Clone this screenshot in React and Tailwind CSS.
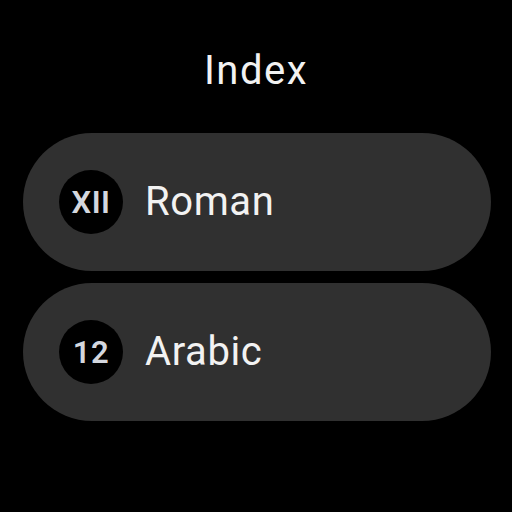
const items = [
  { badge: "XII", label: "Roman" },
  { badge: "12", label: "Arabic" },
];

function IndexRow({ badge, label }) {
  return (
    <div className="flex h-[138px] w-[468px] items-center rounded-full bg-[#303030] pl-[36px]">
      <div className="flex h-[64px] w-[64px] shrink-0 items-center justify-center rounded-full bg-black">
        <span className="text-[31px] font-semibold leading-none tracking-[0.5px] text-[#d4d7de]">{badge}</span>
      </div>
      <span className="ml-[22px] text-[40px] leading-none tracking-[0.6px] text-[#f2f2f2]">{label}</span>
    </div>
  );
}

export default function App() {
  return (
    <main
      className="flex h-[512px] w-[512px] flex-col items-center bg-black"
      style={{ fontFamily: "Roboto, 'Liberation Sans', sans-serif" }}
    >
      <h1 className="pt-[51px] text-[40px] font-normal leading-[40px] tracking-[1.5px] text-[#f2f2f2]">Index</h1>
      <div className="mt-[42px] flex flex-col gap-[12px] pl-[2px]">
        {items.map((item) => (
          <IndexRow key={item.label} {...item} />
        ))}
      </div>
    </main>
  );
}
